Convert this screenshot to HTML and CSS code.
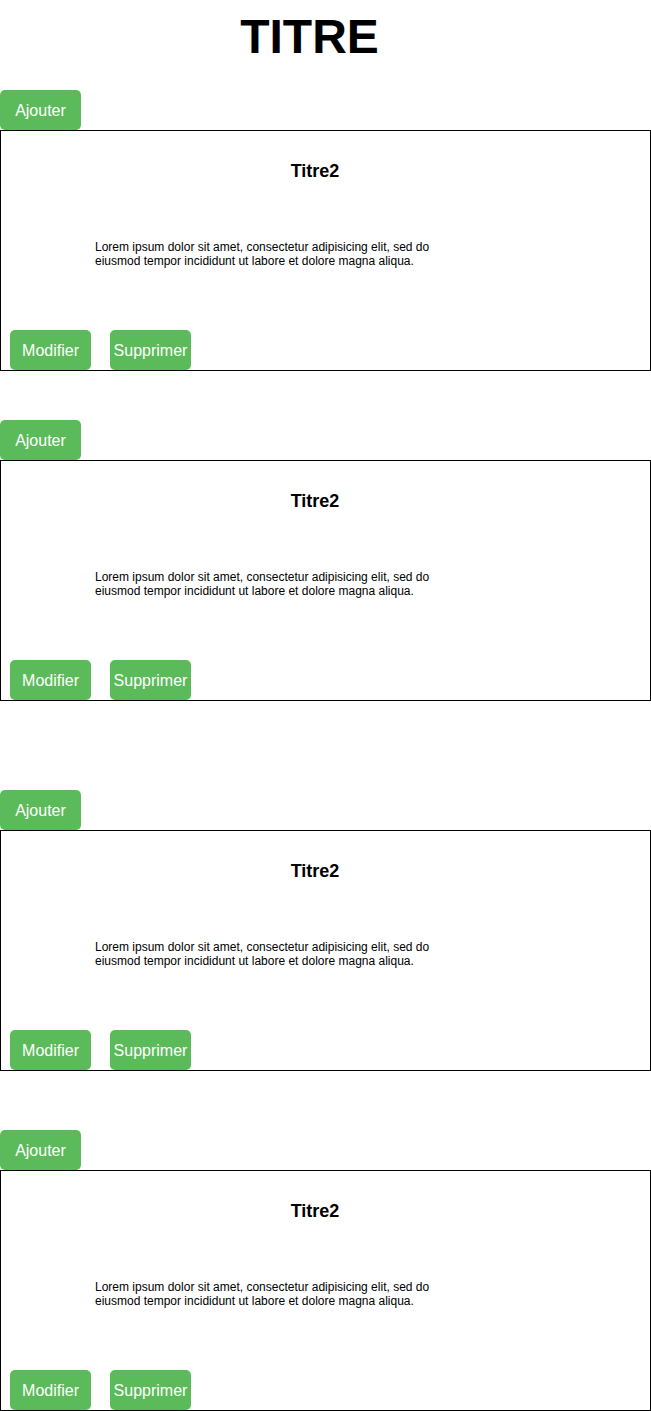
FILE: index.html
```html
<!DOCTYPE html>
<html lang="fr">
<head>
<meta charset="utf-8">
<title>TITRE</title>
<link rel="stylesheet" href="styles.css">
</head>
<body>
<header class="page-title">TITRE</header>

<section class="block block-1">
  <button class="btn btn-add">Ajouter</button>
  <div class="card">
    <h2 class="card-title">Titre2</h2>
    <p class="card-text">Lorem ipsum dolor sit amet, consectetur adipisicing elit, sed do eiusmod tempor incididunt ut labore et dolore magna aliqua.</p>
    <div class="actions">
      <button class="btn">Modifier</button>
      <button class="btn">Supprimer</button>
    </div>
  </div>
</section>

<section class="block block-2">
  <button class="btn btn-add">Ajouter</button>
  <div class="card">
    <h2 class="card-title">Titre2</h2>
    <p class="card-text">Lorem ipsum dolor sit amet, consectetur adipisicing elit, sed do eiusmod tempor incididunt ut labore et dolore magna aliqua.</p>
    <div class="actions">
      <button class="btn">Modifier</button>
      <button class="btn">Supprimer</button>
    </div>
  </div>
</section>

<section class="block block-3">
  <button class="btn btn-add">Ajouter</button>
  <div class="card">
    <h2 class="card-title">Titre2</h2>
    <p class="card-text">Lorem ipsum dolor sit amet, consectetur adipisicing elit, sed do eiusmod tempor incididunt ut labore et dolore magna aliqua.</p>
    <div class="actions">
      <button class="btn">Modifier</button>
      <button class="btn">Supprimer</button>
    </div>
  </div>
</section>

<section class="block block-4">
  <button class="btn btn-add">Ajouter</button>
  <div class="card">
    <h2 class="card-title">Titre2</h2>
    <p class="card-text">Lorem ipsum dolor sit amet, consectetur adipisicing elit, sed do eiusmod tempor incididunt ut labore et dolore magna aliqua.</p>
    <div class="actions">
      <button class="btn">Modifier</button>
      <button class="btn">Supprimer</button>
    </div>
  </div>
</section>
</body>
</html>
```

FILE: styles.css
```css
* { box-sizing: border-box; }

html, body {
  margin: 0;
  padding: 0;
  background: #ffffff;
}

body {
  width: 651px;
  font-family: "Liberation Sans", Arial, Helvetica, sans-serif;
  color: #000000;
}

.page-title {
  height: 90px;
  padding-top: 13px;
  padding-right: 32px;
  font-size: 48px;
  line-height: 48px;
  font-weight: bold;
  text-align: center;
}

.block {
  display: flex;
  flex-direction: column;
  align-items: flex-start;
}

.block-1 { margin-bottom: 49px; }
.block-2 { margin-bottom: 89px; }
.block-3 { margin-bottom: 59px; }

.btn {
  width: 81px;
  height: 40px;
  padding: 1px 0 0 0;
  margin: 0;
  border: none;
  border-radius: 5px;
  background: #5bbb5b;
  color: #ffffff;
  font-family: "Liberation Sans", Arial, Helvetica, sans-serif;
  font-size: 16px;
  line-height: 39px;
  text-align: center;
  white-space: nowrap;
}

.card {
  width: 651px;
  height: 241px;
  border: 1px solid #000000;
  display: flex;
  flex-direction: column;
}

.card-title {
  margin: 30px 0 0 0;
  padding-right: 21px;
  font-size: 18px;
  line-height: 20px;
  font-weight: bold;
  text-align: center;
}

.card-text {
  margin: 59px 0 0 94px;
  width: 350px;
  font-size: 12px;
  line-height: 14px;
}

.actions {
  margin-top: auto;
  padding-left: 9px;
  display: flex;
  gap: 19px;
}
```
